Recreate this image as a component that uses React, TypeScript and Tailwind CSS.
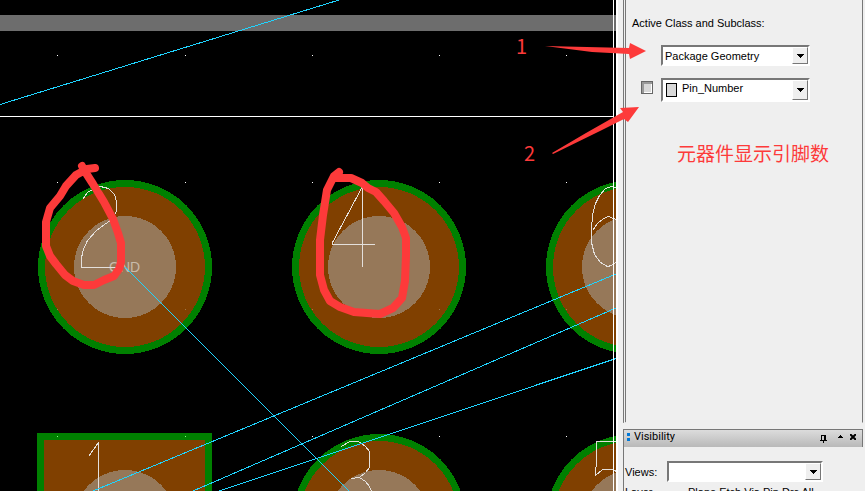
import { useState, type ReactNode } from "react";

const CYAN = "#1fd4ff";
const INK = "#e4e0dc";
const RED = "#fd3a3a";

function RoundPad({ cx, cy }: { cx: number; cy: number }) {
  return (
    <g>
      <circle cx={cx} cy={cy} r="87" fill="#008000" />
      <circle cx={cx} cy={cy} r="80" fill="#804000" />
      <circle cx={cx} cy={cy} r="51" fill="#967859" />
    </g>
  );
}

const gridDots = [
  [57, 55], [185, 55], [312, 55], [439, 55], [566, 55],
  [57, 182], [185, 182], [312, 182], [439, 182], [566, 182],
  [57, 436], [185, 436], [312, 436], [439, 436], [566, 436],
];
const padDots = [[57, 309], [185, 309], [312, 309], [439, 309], [566, 309]];

function BoardCanvas() {
  return (
    <svg width="616" height="491" className="block shrink-0" shapeRendering="crispEdges" role="img" aria-label="PCB layout">
      <rect width="616" height="491" fill="#000" />
      <rect y="15" width="616" height="16" fill="#6d6d6d" />
      <RoundPad cx={125} cy={267} />
      <RoundPad cx={379} cy={267} />
      <RoundPad cx={633} cy={267} />
      <rect x="37" y="433" width="175" height="80" fill="#008000" />
      <rect x="44" y="440" width="161" height="80" fill="#804000" />
      <circle cx="125" cy="521" r="51" fill="#967859" />
      <RoundPad cx={379} cy={521} />
      <RoundPad cx={633} cy={521} />
      {gridDots.map(([x, y]) => (
        <rect key={`${x}-${y}`} x={x} y={y} width="1" height="1" fill={y === 436 && x < 200 ? "#80ff80" : "#fff"} />
      ))}
      {padDots.map(([x, y]) => (
        <rect key={`${x}-${y}`} x={x} y={y} width="1" height="1" fill="#a07848" />
      ))}
      <text x="109" y="272" fontSize="14" fill="#c9bbaa" className="font-['Liberation_Sans',sans-serif]">GND</text>
      <g fill="none" stroke={INK} strokeWidth="1">
        <path d="M82.5 199.5 L87.5 192.5 L94.5 188.5 L100.5 186.5 L108.5 188.5 L114.5 194.5 L116.5 201.5 L116.5 211.5 L111.5 219.5 L96.5 230.5 L87.5 240.5 L83.5 249.5 L81.5 257.5 L81.5 267.5 H123" />
        <path d="M375 244.5 H332.5 V242.5 L362.5 186.5 V267" />
        <path d="M616 187.5 L611.5 186.5 L605.5 188.5 L599.5 195.5 L595.5 203.5 L592.5 214.5 L591.5 230.5 L591.5 242.5 L594.5 254.5 L600.5 262.5 L607.5 266.5 L611.5 265.5 L616 262.5 M592.5 230.5 L597.5 223.5 L603.5 218.5 L608.5 216.5 L616 219.5 M613.5 264 V270" />
        <path d="M88.5 456.5 L98.5 442.5 V491" />
        <path d="M341.5 446.5 L349.5 441.5 H358.5 L365.5 446.5 L369.5 451.5 V467.5 L365.5 472.5 L359.5 477.5 L351.5 478.5 M359.5 477.5 L365.5 481.5 L369.5 486.5 L371.5 491" />
        <path d="M616 441.5 H596.5 V458.5 L595.5 475.5 L602.5 469.5 H613.5 L616 471.5" />
      </g>
      <g fill="none" stroke={CYAN} strokeWidth="1">
        <path d="M0 104.5 L339 0" />
        <path d="M125 267 L349 491" />
        <path d="M93 491 L616 274" />
        <path d="M193 491 L616 308" />
        <path d="M219 491 L616 358.5" />
      </g>
      <rect y="116" width="614" height="1" fill="#fff" />
      <rect x="613" width="1" height="491" fill="#fff" />
    </svg>
  );
}

function Annotations() {
  return (
    <svg width="865" height="491" className="pointer-events-none absolute left-0 top-0" aria-hidden="true">
      <g fill="none" stroke={RED} strokeWidth="8" strokeLinecap="round" strokeLinejoin="round">
        <path d="M82 166 L84 170 L93 184 L104 202 L113 219 L118 233 L121 243 V262 L119 269 L114 276 L104 280 L94 285 H84 L73 281 L65 275 L56 264 L50 256 L46 246 V222 L50 208 L60 196 L66 186 L76 175 L87 169 L95 168" />
        <path d="M339 172 L334 176 L327 190 L323 215 L320 240 V275 L324 290 L330 301 L340 307 L354 312 L380 314 L393 308 L402 298 L405 281 L406 255 V238 L402 227 L394 213 L384 201 L376 192 L368 188 L362 183 L351 178 H336" />
      </g>
      <g fill={RED}>
        <path d="M545 46 L629 48 L630 43 L646 51 L630 59 L629 54 L592 52 Z" />
        <path d="M552 153 L586 133 L623 112 L620 108 L639 107 L628 122 L624 119 L600 131 L553 154 Z" />
      </g>
      <g fill={RED} fontSize="20" className="font-['Noto_Sans_CJK_SC',sans-serif]">
        <text x="516" y="54">1</text>
        <text x="524" y="161">2</text>
      </g>
    </svg>
  );
}

type DropDownProps = { id: string; label?: string; options: string[]; className: string; selectClass: string; children?: ReactNode };

function DropDown({ id, label, options, className, selectClass, children }: DropDownProps) {
  return (
    <div className={`relative border-2 border-b-white border-l-[#777] border-r-white border-t-[#777] bg-white ${className}`}>
      <select id={id} aria-label={label} className={`block h-full w-full appearance-none bg-white text-black outline-none ${selectClass}`}>
        {options.map((o) => (
          <option key={o}>{o}</option>
        ))}
      </select>
      {children}
      <span className="pointer-events-none absolute inset-y-0 right-0 flex w-4 items-center justify-center border border-b-[#777] border-l-white border-r-[#777] border-t-white bg-[#efefef]">
        <svg width="7" height="4" shapeRendering="crispEdges">
          <path d="M0 0 H7 V1 H6 V2 H5 V3 H4 V4 H3 V3 H2 V2 H1 V1 H0 Z" fill="#000" />
        </svg>
      </span>
    </div>
  );
}

export default function App() {
  const [on, setOn] = useState(false);
  return (
    <main className="relative flex h-screen overflow-hidden bg-[#efefef] font-['Liberation_Sans',Arial,sans-serif] text-[11px] leading-4 text-black">
      <section className="min-w-0 flex-1 overflow-hidden bg-black">
        <BoardCanvas />
      </section>
      <aside className="flex w-[249px] shrink-0 flex-col border-l-2 border-white pl-[5px] pr-0.5">
        <section className="h-[423px] shrink-0 border-b border-l-[3px] border-r border-b-[#efefef] border-l-[#777] border-r-[#777] pt-[15px] [border-left-style:double]">
          <label htmlFor="class" className="block pl-1.5">Active Class and Subclass:</label>
          <DropDown id="class" className="ml-[35px] mt-3.5 h-[21px] w-[149px]" selectClass="pl-0.5" options={["Package Geometry", "Board Geometry"]} />
          <div className="mt-3 flex items-start pl-[15px]">
            <input
              type="checkbox"
              aria-label="Subclass visible"
              checked={on}
              onChange={() => setOn(!on)}
              className="mt-[3px] h-[13px] w-3 appearance-none border border-[#666] bg-[#d8d8d8] shadow-[inset_2px_2px_#999,inset_-1px_-1px_#fff]"
            />
            <DropDown id="subclass" label="Subclass" className="ml-2 h-6 w-[149px]" selectClass="pb-1 pl-[19px]" options={["Pin_Number", "Assembly_Top"]}>
              <span className="pointer-events-none absolute left-[3px] top-[3px] h-3.5 w-[11px] border border-black bg-[#d8d8d8]" />
            </DropDown>
          </div>
          <p className="mt-[39px] pl-[51px] font-['Noto_Sans_CJK_SC',sans-serif] text-[19px] font-normal leading-6 text-[#fd3a3a]">元器件显示引脚数</p>
        </section>
        <section className="mt-1.5 min-h-0 flex-1 overflow-hidden border-l border-t border-[#777]">
          <header className="flex h-[17px] items-center border-r border-[#777] bg-linear-to-b from-[#dcdcdc] to-[#b9b9b9] pb-1 pl-[3px] pr-1">
            <span className="flex flex-col gap-0.5">
              <span className="h-[3px] w-[3px] bg-[#0078d7]" />
              <span className="h-[3px] w-[3px] bg-[#0078d7]" />
            </span>
            <h2 className="flex-1 pl-1 font-[Roboto,sans-serif] text-[11px]">Visibility</h2>
            <button type="button" aria-label="Pin panel" className="mt-1 flex w-[18px] justify-center">
              <svg width="7" height="8" shapeRendering="crispEdges">
                <path d="M1 0 H6 V5 H7 V6 H4 V8 H3 V6 H0 V5 H1 Z M2 1 V5 H4 V1 Z" fillRule="evenodd" />
              </svg>
            </button>
            <button type="button" aria-label="Collapse panel" className="flex w-4 justify-center">
              <svg width="5" height="3" shapeRendering="crispEdges">
                <path d="M2 0 H3 V1 H4 V2 H5 V3 H0 V2 H1 V1 H2 Z" />
              </svg>
            </button>
            <button type="button" aria-label="Close panel" className="flex w-2.5 justify-center">
              <svg width="6" height="6" viewBox="0 0 6 6">
                <path d="M0 0 L6 6 M6 0 L0 6" stroke="#000" strokeWidth="2" />
              </svg>
            </button>
          </header>
          <div className="mt-3.5 flex items-center pl-px">
            <label htmlFor="views" className="w-[42px]">Views:</label>
            <DropDown id="views" className="h-[21px] w-[156px]" selectClass="pl-0.5" options={[""]} />
          </div>
          <div className="mt-0.5 flex whitespace-nowrap pl-px">
            <span className="w-[63px]">Layer</span>
            <span>Plane Etch Via Pin Drc All</span>
          </div>
        </section>
      </aside>
      <Annotations />
    </main>
  );
}
